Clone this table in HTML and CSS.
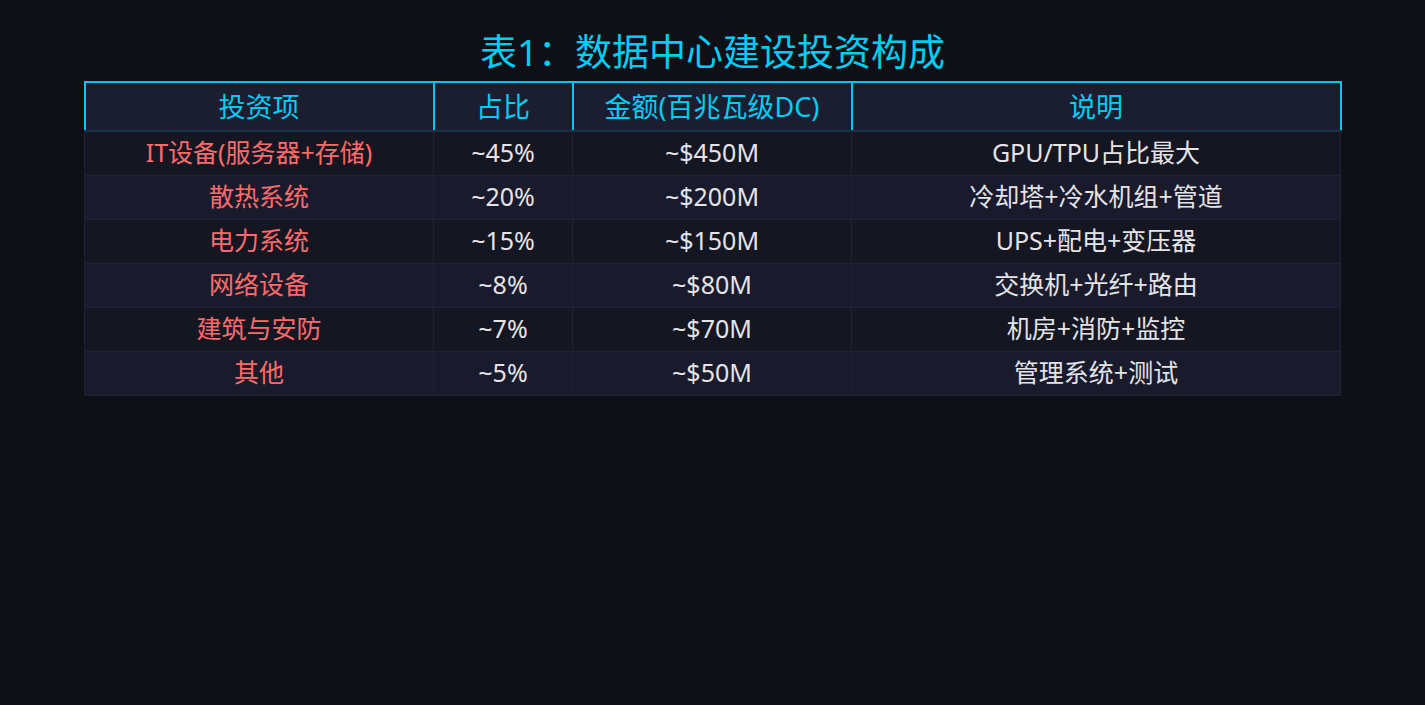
FILE: index.html
```html
<!DOCTYPE html>
<html lang="zh">
<head>
<meta charset="utf-8">
<title>表1：数据中心建设投资构成</title>
<link rel="stylesheet" href="styles.css">
</head>
<body>
<div class="page">
  <h1 class="title">表1：数据中心建设投资构成</h1>
  <table class="invest">
    <colgroup>
      <col class="c1"><col class="c2"><col class="c3"><col class="c4">
    </colgroup>
    <thead>
      <tr><th>投资项</th><th>占比</th><th>金额(百兆瓦级DC)</th><th>说明</th></tr>
    </thead>
    <tbody>
      <tr><td class="item">IT设备(服务器+存储)</td><td>~45%</td><td>~$450M</td><td>GPU/TPU占比最大</td></tr>
      <tr><td class="item">散热系统</td><td>~20%</td><td>~$200M</td><td>冷却塔+冷水机组+管道</td></tr>
      <tr><td class="item">电力系统</td><td>~15%</td><td>~$150M</td><td>UPS+配电+变压器</td></tr>
      <tr><td class="item">网络设备</td><td>~8%</td><td>~$80M</td><td>交换机+光纤+路由</td></tr>
      <tr><td class="item">建筑与安防</td><td>~7%</td><td>~$70M</td><td>机房+消防+监控</td></tr>
      <tr><td class="item">其他</td><td>~5%</td><td>~$50M</td><td>管理系统+测试</td></tr>
    </tbody>
  </table>
</div>
</body>
</html>
```
FILE: styles.css
```css
html, body {
  margin: 0;
  padding: 0;
  background: #0f1015;
}
body {
  font-family: "Noto Sans", "Noto Sans CJK SC", sans-serif;
  color: #e2e2e6;
}
.page {
  padding-top: 28px;
}
.title {
  margin: 0 0 5px 0;
  font-size: 37px;
  line-height: 48px;
  font-weight: 400;
  text-align: center;
  color: #00cdf5;
}
.invest {
  width: 1256px;
  margin: 0 auto;
  border-collapse: collapse;
  table-layout: fixed;
}
.c1 { width: 349px; }
.c2 { width: 139px; }
.c3 { width: 279px; }
.c4 { width: 489px; }
.invest th {
  background: #1b1e30;
  color: #00cdf5;
  font-size: 27px;
  font-weight: 400;
  line-height: 37px;
  padding: 5px 8px 5px 8px;
  border: 2px solid #00c8f0;
  border-bottom: 2px solid #143446;
  text-align: center;
}
.invest td {
  font-size: 25px;
  line-height: 35px;
  padding: 3px 8px 5px 8px;
  border: 1px solid #202335;
  text-align: center;
  color: #e4e4e8;
}
.invest tbody tr:nth-child(odd) td { background: #141622; }
.invest tbody tr:nth-child(even) td { background: #191b2d; }
.invest td.item { color: #ff6b6b; }
```
